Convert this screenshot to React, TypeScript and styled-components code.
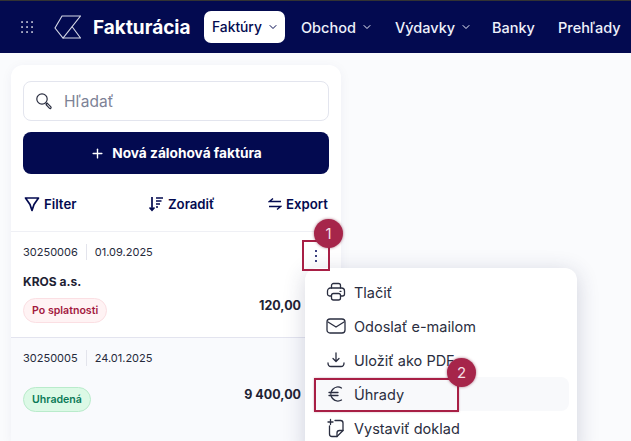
import styled, { createGlobalStyle } from "styled-components";
import { ChevronDown, Plus } from "lucide-react";

const GlobalStyle = createGlobalStyle`
  html, body {
    margin: 0;
    height: 100%;
    overflow: hidden;
    background: #fafbfd;
    font-family: "Inter", "Noto Sans", sans-serif;
    color: #1e2233;
  }
`;

const Page = styled.div`
  position: relative;
  width: 631px;
  height: 441px;
  overflow: hidden;
  border-top: 1px solid #333;
  box-sizing: border-box;
`;

const Navbar = styled.header`
  height: 52px;
  background: #030a50;
  display: flex;
  align-items: center;
  padding-left: 21px;
  white-space: nowrap;
  overflow: hidden;
`;

const Brand = styled.div`
  display: flex;
  align-items: center;
  color: #fff;
  font-size: 19px;
  font-weight: 700;
  margin-left: 20px;
  gap: 12px;
  width: 150px;
  flex-shrink: 0;
`;

const NavList = styled.nav`
  display: flex;
  align-items: center;
  gap: 8px;
`;

const NavItem = styled.div<{ $active?: boolean; $width: number }>`
  display: flex;
  align-items: center;
  gap: 5px;
  height: 32px;
  width: ${(p) => p.$width}px;
  box-sizing: border-box;
  padding-left: 8px;
  border-radius: 7px;
  font-size: ${(p) => (p.$active ? "13.8px" : "14.5px")};
  font-weight: 500;
  color: ${(p) => (p.$active ? "#030a50" : "#eef1fb")};
  background: ${(p) => (p.$active ? "#fff" : "transparent")};
  flex-shrink: 0;
`;

const Panel = styled.section`
  width: 330px;
  margin: 12px 0 0 11px;
  background: #fff;
  border-radius: 12px 12px 0 0;
  box-shadow: 0 2px 12px rgba(30, 40, 90, 0.05);
`;

const PanelTop = styled.div`
  padding: 16px 12px 0;
`;

const SearchBox = styled.div`
  height: 40px;
  box-sizing: border-box;
  border: 1px solid #e3e5ee;
  border-radius: 8px;
  display: flex;
  align-items: center;
  gap: 11px;
  padding-left: 11px;
  font-size: 15.5px;
  color: #7d8296;
`;

const PrimaryButton = styled.button`
  width: 100%;
  height: 42px;
  margin-top: 11px;
  padding: 0;
  border: 0;
  border-radius: 8px;
  background: #030a50;
  color: #fff;
  display: flex;
  align-items: center;
  justify-content: center;
  gap: 7px;
  font-family: inherit;
  font-size: 13.7px;
  font-weight: 700;
`;

const Toolbar = styled.div`
  display: flex;
  justify-content: space-between;
  align-items: center;
  box-sizing: border-box;
  height: 57px;
  padding: 2px 1px 0 1px;
`;

const ToolButton = styled.div`
  display: flex;
  align-items: center;
  gap: 4px;
  color: #030a50;
  font-size: 13.2px;
  font-weight: 600;

  &:nth-child(2) {
    margin-left: 18px;
  }
`;

const Row = styled.article<{ $muted?: boolean }>`
  height: 106px;
  box-sizing: border-box;
  padding: 11px 12px 0;
  background: ${(p) => (p.$muted ? "#f9fafd" : "#fff")};
  border-top: 1px solid ${(p) => (p.$muted ? "#e3e4ef" : "#eff0f5")};
`;

const RowMeta = styled.div`
  display: flex;
  align-items: center;
  height: 18px;
  font-size: 11px;
  color: #262a3c;
`;

const MetaDivider = styled.span`
  width: 1px;
  height: 16px;
  background: #e3e4ec;
  margin: 0 8px;
`;

const Customer = styled.div`
  height: 16px;
  margin-top: 13px;
  font-size: 12px;
  font-weight: 700;
  color: #1e2233;
`;

const RowBottom = styled.div<{ $top: number }>`
  display: flex;
  justify-content: space-between;
  align-items: flex-start;
  margin-top: ${(p) => p.$top}px;
  padding-right: 28px;
`;

const Badge = styled.span<{ $tone: "red" | "green" }>`
  display: inline-flex;
  align-items: center;
  height: 25px;
  box-sizing: border-box;
  padding: 0 8px;
  border-radius: 13px;
  font-size: 10.6px;
  font-weight: 600;
  border: 1px solid ${(p) => (p.$tone === "red" ? "#fbdfe3" : "#b9ebcb")};
  background: ${(p) => (p.$tone === "red" ? "#fff3f4" : "#dcf9e6")};
  color: ${(p) => (p.$tone === "red" ? "#a3193f" : "#0b7a57")};
`;

const Amount = styled.span`
  font-size: 12.5px;
  line-height: 16px;
  font-weight: 700;
  color: #1e2233;
`;

const DotsButton = styled.div`
  position: absolute;
  left: 302px;
  top: 239px;
  width: 28px;
  height: 31px;
  box-sizing: border-box;
  border: 2px solid #a81f45;
  display: flex;
  align-items: center;
  justify-content: center;
`;

const Menu = styled.div`
  position: absolute;
  left: 305px;
  top: 267px;
  width: 272px;
  height: 190px;
  padding-top: 7px;
  box-sizing: border-box;
  background: #fff;
  border-radius: 12px;
  box-shadow: 0 4px 22px rgba(40, 45, 90, 0.2);
`;

const MenuItem = styled.div<{ $active?: boolean }>`
  display: flex;
  align-items: center;
  gap: 8px;
  height: 34px;
  margin: 0 8px;
  padding-left: 13px;
  border-radius: 8px;
  font-size: 14.5px;
  color: #2a2e40;
  background: ${(p) => (p.$active ? "#f8f9fb" : "transparent")};
`;

const Marker = styled.div<{ $x: number; $y: number }>`
  position: absolute;
  left: ${(p) => p.$x}px;
  top: ${(p) => p.$y}px;
  width: 29px;
  height: 29px;
  border-radius: 50%;
  background: #a6254a;
  box-shadow: 0 0 3px rgba(120, 20, 50, 0.6);
  color: #f5dfe5;
  font-size: 15px;
  display: flex;
  align-items: center;
  justify-content: center;
`;

const Callout = styled.div`
  position: absolute;
  left: 314px;
  top: 377px;
  width: 145px;
  height: 34px;
  box-sizing: border-box;
  border: 2px solid #a81f45;
  box-shadow: 0 0 2px rgba(120, 20, 50, 0.3);
`;

const GridIcon = () => (
  <svg width="13" height="13" viewBox="0 0 13 13" fill="#fff">
    {[1, 6, 11].flatMap((y) =>
      [1, 6, 11].map((x) => <rect key={`${x}-${y}`} x={x - 0.7} y={y - 0.7} width="1.5" height="1.5" />)
    )}
  </svg>
);

const Logo = () => (
  <svg width="27" height="27" viewBox="0 0 27 27" fill="none" stroke="#d5d8e6" strokeWidth="1.1">
    <path d="M8 2H26.500L9 24 1 14z" />
    <path d="M9 24H26.500L18 12.500" />
  </svg>
);

const SearchIcon = () => (
  <svg width="18" height="18" viewBox="0 0 18 18" fill="none" stroke="#2a2e40" strokeWidth="1.2">
    <circle cx="7" cy="7" r="5.2" />
    <path d="M10.8 10.8l1.4 1.4" />
    <path d="M12.2 11.2l3.7 3.7a1 1 0 0 1-1.4 1.4l-3.4-3.7z" />
  </svg>
);

const FilterIcon = () => (
  <svg width="16" height="16" viewBox="0 0 16 16" fill="none" stroke="#030a50" strokeWidth="1.7" strokeLinejoin="round">
    <path d="M1.500 2h13L10 8.500 8 14.500 6 8.500z" />
  </svg>
);

const SortIcon = () => (
  <svg width="16" height="16" viewBox="0 0 16 16" fill="none" stroke="#030a50" strokeWidth="1.7">
    <path d="M4 1v13M1.500 11.500 4 14.200l2.500-2.700" />
    <path d="M8 2h7M8 5h5.500M8 8h4M8 11h2" />
  </svg>
);

const SwapIcon = () => (
  <svg width="14" height="14" viewBox="0 0 14 14" fill="none" stroke="#030a50" strokeWidth="1.4">
    <path d="M13 4.500H1.500L5 1.500M1 9.500h11.500L9 12.500" />
  </svg>
);

const DotsIcon = () => (
  <svg width="4" height="14" viewBox="0 0 4 14" fill="#3d4180">
    <rect x="1" y="1" width="2" height="2" />
    <rect x="1" y="6" width="2" height="2" />
    <rect x="1" y="11" width="2" height="2" />
  </svg>
);

const iconProps = {
  width: 20,
  height: 20,
  viewBox: "0 0 20 20",
  fill: "none",
  stroke: "#2a2e40",
  strokeWidth: 1.3,
  strokeLinecap: "round" as const,
  strokeLinejoin: "round" as const,
};

const PrintIcon = () => (
  <svg {...iconProps}>
    <path d="M5.500 6V3.500a2 2 0 0 1 2-2h5a2 2 0 0 1 2 2V6" />
    <path d="M5 14H3.500a2 2 0 0 1-2-2V9a3 3 0 0 1 3-3h11a3 3 0 0 1 3 3v3a2 2 0 0 1-2 2H15" />
    <rect x="5.500" y="11.500" width="9" height="6.500" rx="2" />
    <path d="M14 9.300h1" />
  </svg>
);

const MailIcon = () => (
  <svg {...iconProps}>
    <rect x="1" y="3" width="18" height="14" rx="3" />
    <path d="M2 6l8 5 8-5" />
  </svg>
);

const DownloadIcon = () => (
  <svg {...iconProps}>
    <path d="M10 3v8M7 8.500l3 3 3-3" />
    <path d="M2 13c0 2.500 1 3.500 3 3.500h10c2 0 3-1 3-3.500" />
  </svg>
);

const EuroIcon = () => (
  <svg {...iconProps}>
    <path d="M15.500 4a7 7 0 1 0 0 12" />
    <path d="M3 8.500h9M3 11.500h9" />
  </svg>
);

const DocIcon = () => (
  <svg {...iconProps}>
    <path d="M9 2.500h5.500a2.500 2.500 0 0 1 2.500 2.500v7.500L11 18.500H6a2.500 2.500 0 0 1-2.500-2.500V8" />
    <path d="M11 18.500V15a2.500 2.500 0 0 1 2.500-2.500H17" />
    <path d="M4.500 1.500v5M2 4h5" />
  </svg>
);

export default function App() {
  return (
    <>
      <GlobalStyle />
      <Page>
        <Navbar>
          <GridIcon />
          <Brand>
            <Logo />
            Fakturácia
          </Brand>
          <NavList>
            <NavItem $active $width={81}>
              Faktúry <ChevronDown size={12} />
            </NavItem>
            <NavItem $width={86}>
              Obchod <ChevronDown size={12} />
            </NavItem>
            <NavItem $width={89}>
              Výdavky <ChevronDown size={12} />
            </NavItem>
            <NavItem $width={58}>Banky</NavItem>
            <NavItem $width={80}>Prehľady</NavItem>
          </NavList>
        </Navbar>
        <Panel>
          <PanelTop>
            <SearchBox>
              <SearchIcon />
              Hľadať
            </SearchBox>
            <PrimaryButton>
              <Plus size={15} strokeWidth={2.2} />
              Nová zálohová faktúra
            </PrimaryButton>
            <Toolbar>
              <ToolButton>
                <FilterIcon />
                Filter
              </ToolButton>
              <ToolButton>
                <SortIcon />
                Zoradiť
              </ToolButton>
              <ToolButton>
                <SwapIcon />
                Export
              </ToolButton>
            </Toolbar>
          </PanelTop>
          <Row>
            <RowMeta>
              30250006
              <MetaDivider />
              01.09.2025
            </RowMeta>
            <Customer>KROS a.s.</Customer>
            <RowBottom $top={8}>
              <Badge $tone="red">Po splatnosti</Badge>
              <Amount>120,00</Amount>
            </RowBottom>
          </Row>
          <Row $muted>
            <RowMeta>
              30250005
              <MetaDivider />
              24.01.2025
            </RowMeta>
            <RowBottom $top={20}>
              <Badge $tone="green">Uhradená</Badge>
              <Amount>9 400,00</Amount>
            </RowBottom>
          </Row>
        </Panel>

        <Menu>
          <MenuItem>
            <PrintIcon />
            Tlačiť
          </MenuItem>
          <MenuItem>
            <MailIcon />
            Odoslať e-mailom
          </MenuItem>
          <MenuItem>
            <DownloadIcon />
            Uložiť ako PDF
          </MenuItem>
          <MenuItem $active>
            <EuroIcon />
            Úhrady
          </MenuItem>
          <MenuItem>
            <DocIcon />
            Vystaviť doklad
          </MenuItem>
        </Menu>
        <DotsButton>
          <DotsIcon />
        </DotsButton>
        <Callout />
        <Marker $x={314} $y={218}>1</Marker>
        <Marker $x={447} $y={357}>2</Marker>
      </Page>
    </>
  );
}
